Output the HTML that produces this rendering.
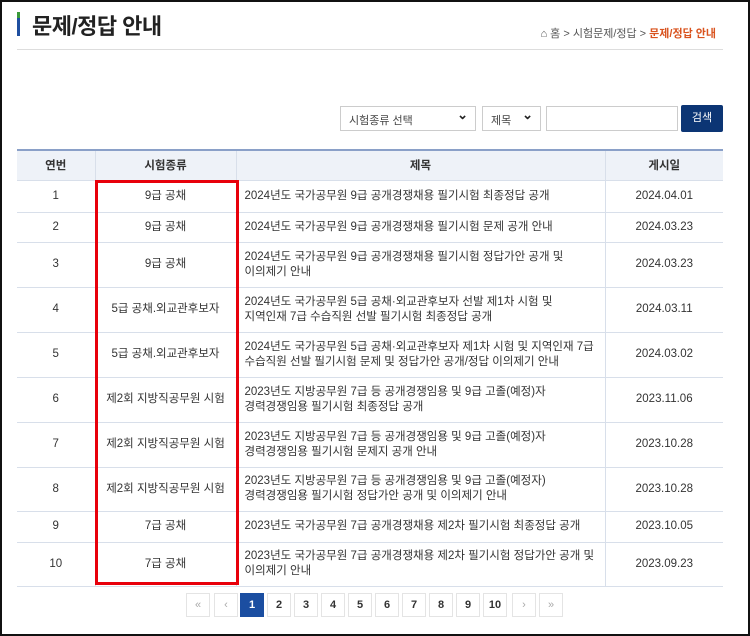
<!DOCTYPE html>
<html><head><meta charset="utf-8"><style>
*{margin:0;padding:0;box-sizing:border-box}
body{width:750px;height:636px;background:#fff;font-family:"Liberation Sans","Noto Sans CJK KR",sans-serif;position:relative;overflow:hidden;border:2px solid #111}
.abs{position:absolute}
.bar{left:15px;top:10px;width:3px;height:24px;background:linear-gradient(#3a9a3a 0 25%,#1f4fa0 25%)}
h1{position:absolute;left:30px;top:7px;font-size:22px;font-weight:bold;color:#222;letter-spacing:-0.5px}
.bc{position:absolute;right:32px;top:23px;font-size:11px;color:#555}
.bc b{color:#d9531e}
.line{left:15px;top:47px;width:706px;height:1px;background:#ddd}
.sel{position:absolute;top:104px;height:25px;border:1px solid #ccc;font-size:11px;color:#444;padding:5px 8px;background:#fff}
.sel.s:after{content:"⌄";position:absolute;right:7px;top:0px;font-size:13px;font-weight:bold;color:#222}
.btn{left:679px;top:103px;width:42px;height:27px;background:#0c3574;color:#fff;font-size:11px;text-align:center;line-height:27px;border-radius:2px}
table{position:absolute;left:15px;top:147px;width:706px;border-collapse:collapse;font-size:11.5px;color:#333}
th{background:#eef2f8;height:30px;font-weight:bold;border-top:2px solid #8aa0c8;border-left:1px solid #d8dfea;border-bottom:1px solid #d8dfea}
td{border-left:1px solid #d8dfea;border-bottom:1px solid #d8dfea;text-align:center;line-height:15px}
th:first-child,td:first-child{border-left:none}
td.t{text-align:left;padding-left:8px}
.red{left:93px;top:178px;width:144px;height:405px;border:3px solid #e8000b}
.pg{position:absolute;top:591px;width:24px;height:24px;border:1px solid #e4e4e4;font-size:11px;font-weight:bold;color:#333;text-align:center;line-height:22px}
.pg.a{background:#1b4ea1;color:#fff;border-color:#1b4ea1}
.pg.g{color:#aaa;font-weight:normal}
</style></head><body>
<div class="abs bar"></div>
<h1>문제/정답 안내</h1>
<div class="bc">⌂ 홈 &gt; 시험문제/정답 &gt; <b>문제/정답 안내</b></div>
<div class="abs line"></div>
<div class="sel s" style="left:338px;width:136px">시험종류 선택</div>
<div class="sel s" style="left:480px;width:59px">제목</div>
<div class="sel" style="left:544px;width:132px"></div>
<div class="abs btn">검색</div>
<table>
<tr><th style="width:78px">연번</th><th style="width:141px">시험종류</th><th style="width:369px">제목</th><th>게시일</th></tr>
<tr style="height:32px"><td>1</td><td>9급 공채</td><td class="t">2024년도 국가공무원 9급 공개경쟁채용 필기시험 최종정답 공개</td><td>2024.04.01</td></tr>
<tr style="height:30px"><td>2</td><td>9급 공채</td><td class="t">2024년도 국가공무원 9급 공개경쟁채용 필기시험 문제 공개 안내</td><td>2024.03.23</td></tr>
<tr style="height:45px"><td>3</td><td>9급 공채</td><td class="t">2024년도 국가공무원 9급 공개경쟁채용 필기시험 정답가안 공개 및<br>이의제기 안내</td><td>2024.03.23</td></tr>
<tr style="height:45px"><td>4</td><td>5급 공채.외교관후보자</td><td class="t">2024년도 국가공무원 5급 공채·외교관후보자 선발 제1차 시험 및<br>지역인재 7급 수습직원 선발 필기시험 최종정답 공개</td><td>2024.03.11</td></tr>
<tr style="height:45px"><td>5</td><td>5급 공채.외교관후보자</td><td class="t">2024년도 국가공무원 5급 공채·외교관후보자 제1차 시험 및 지역인재 7급<br>수습직원 선발 필기시험 문제 및 정답가안 공개/정답 이의제기 안내</td><td>2024.03.02</td></tr>
<tr style="height:45px"><td>6</td><td>제2회 지방직공무원 시험</td><td class="t">2023년도 지방공무원 7급 등 공개경쟁임용 및 9급 고졸(예정)자<br>경력경쟁임용 필기시험 최종정답 공개</td><td>2023.11.06</td></tr>
<tr style="height:45px"><td>7</td><td>제2회 지방직공무원 시험</td><td class="t">2023년도 지방공무원 7급 등 공개경쟁임용 및 9급 고졸(예정)자<br>경력경쟁임용 필기시험 문제지 공개 안내</td><td>2023.10.28</td></tr>
<tr style="height:44px"><td>8</td><td>제2회 지방직공무원 시험</td><td class="t">2023년도 지방공무원 7급 등 공개경쟁임용 및 9급 고졸(예정자)<br>경력경쟁임용 필기시험 정답가안 공개 및 이의제기 안내</td><td>2023.10.28</td></tr>
<tr style="height:31px"><td>9</td><td>7급 공채</td><td class="t">2023년도 국가공무원 7급 공개경쟁채용 제2차 필기시험 최종정답 공개</td><td>2023.10.05</td></tr>
<tr style="height:44px"><td>10</td><td>7급 공채</td><td class="t">2023년도 국가공무원 7급 공개경쟁채용 제2차 필기시험 정답가안 공개 및<br>이의제기 안내</td><td>2023.09.23</td></tr>
</table>
<div class="abs red"></div>
<div class="pg g" style="left:184px">«</div>
<div class="pg g" style="left:212px">‹</div>
<div class="pg a" style="left:238px">1</div>
<div class="pg" style="left:265px">2</div>
<div class="pg" style="left:292px">3</div>
<div class="pg" style="left:319px">4</div>
<div class="pg" style="left:346px">5</div>
<div class="pg" style="left:373px">6</div>
<div class="pg" style="left:400px">7</div>
<div class="pg" style="left:427px">8</div>
<div class="pg" style="left:454px">9</div>
<div class="pg" style="left:481px">10</div>
<div class="pg g" style="left:510px">›</div>
<div class="pg g" style="left:537px">»</div>
</body></html>
